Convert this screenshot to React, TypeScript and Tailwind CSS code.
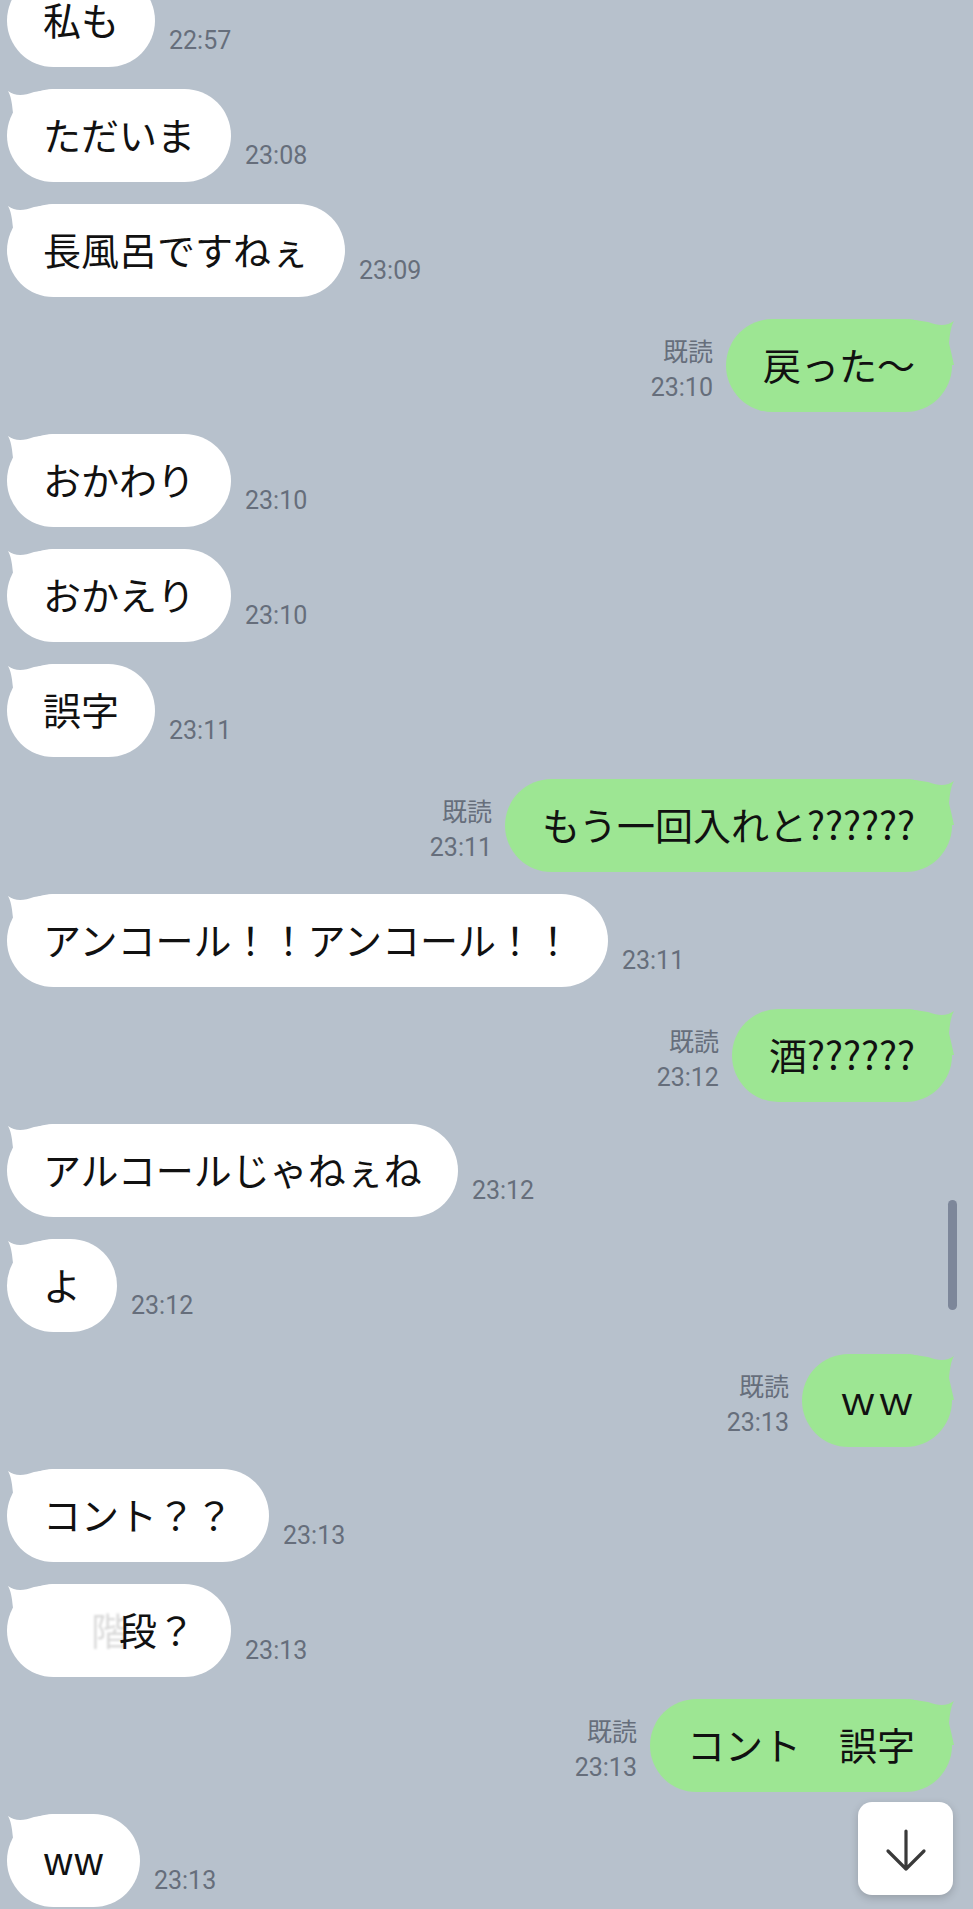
import { ReactNode } from "react";

type Msg = {
  side: "in" | "out";
  text: ReactNode;
  time: string;
};

const messages: Msg[] = [
  { side: "in", text: "私も", time: "22:57" },
  { side: "in", text: "ただいま", time: "23:08" },
  { side: "in", text: "長風呂ですねぇ", time: "23:09" },
  { side: "out", text: "戻った〜", time: "23:10" },
  { side: "in", text: "おかわり", time: "23:10" },
  { side: "in", text: "おかえり", time: "23:10" },
  { side: "in", text: "誤字", time: "23:11" },
  { side: "out", text: "もう一回入れと??????", time: "23:11" },
  { side: "in", text: "アンコール！！アンコール！！", time: "23:11" },
  { side: "out", text: "酒??????", time: "23:12" },
  { side: "in", text: "アルコールじゃねぇね", time: "23:12" },
  { side: "in", text: "よ", time: "23:12" },
  { side: "out", text: "ｗｗ", time: "23:13" },
  { side: "in", text: "コント？？", time: "23:13" },
  {
    side: "in",
    text: (
      <>
        <span className="opacity-0">手</span>
        <span className="relative left-[10px] text-black/15 blur-[1.2px]">階</span>
        段？
      </>
    ),
    time: "23:13",
  },
  { side: "out", text: "コント　誤字", time: "23:13" },
  { side: "in", text: "ww", time: "23:13" },
];

const cjk = "font-['Noto_Sans_CJK_JP','Noto_Sans',sans-serif]";

function Tail({ color, flip }: { color: string; flip?: boolean }) {
  return (
    <svg
      width="46"
      height="46"
      viewBox="0 0 46 46"
      className={
        flip
          ? "absolute right-[-2px] top-0 -scale-x-100"
          : "absolute left-[1px] top-0"
      }
    >
      <path
        d="M0 2 C7 7 15 7 26 3 L46 0 L46 46 L0 46 L5 24 C4 14 3 7 0 2 Z"
        fill={color}
      />
    </svg>
  );
}

function Bubble({ msg }: { msg: Msg }) {
  const out = msg.side === "out";
  return (
    <div
      className={
        out
          ? "relative flex h-[93px] items-center rounded-[46.5px] bg-[#9de693] px-[37px]"
          : "relative flex h-[93px] items-center rounded-[46.5px] bg-white px-[36px]"
      }
    >
      <Tail color={out ? "#9de693" : "#ffffff"} flip={out} />
      <span
        className={`relative -top-[2px] whitespace-nowrap text-[38px] leading-none text-[#111] ${cjk}`}
      >
        {msg.text}
      </span>
    </div>
  );
}

function Row({ msg }: { msg: Msg }) {
  if (msg.side === "out") {
    return (
      <div className="flex items-end justify-end">
        <div className="mr-[13px] flex flex-col items-end pb-[10px] text-[#666e7b]">
          <span className={`text-[25px] leading-[30px] ${cjk}`}>既読</span>
          <span className="mt-[9px] font-['Roboto',sans-serif] text-[25px] leading-[28px]">
            {msg.time}
          </span>
        </div>
        <Bubble msg={msg} />
      </div>
    );
  }
  return (
    <div className="flex items-end">
      <Bubble msg={msg} />
      <span className="ml-[14px] pb-[12px] font-['Roboto',sans-serif] text-[25px] leading-[28px] text-[#666e7b]">
        {msg.time}
      </span>
    </div>
  );
}

export default function App() {
  return (
    <div className="relative h-[1909px] w-full overflow-hidden bg-[#b7c1cc]">
      <div className="-mt-[26px] flex flex-col gap-[22px] pl-[7px] pr-[21px]">
        {messages.map((m, i) => (
          <Row key={i} msg={m} />
        ))}
      </div>

      {/* scrollbar */}
      <div className="absolute left-[948px] top-[1200px] h-[110px] w-[9px] rounded-full bg-[#7d879a]" />

      {/* jump to bottom */}
      <div className="absolute bottom-[14px] right-[20px] flex h-[93px] w-[95px] items-center justify-center rounded-[14px] bg-white shadow-[0_3px_8px_rgba(0,0,0,0.18)]">
        <svg width="48" height="48" viewBox="0 0 48 48" fill="none">
          <path
            d="M24 6 V44 M6 26 L24 44 L42 26"
            stroke="#3a3a3a"
            strokeWidth="3.2"
            strokeLinecap="round"
            strokeLinejoin="round"
          />
        </svg>
      </div>
    </div>
  );
}
